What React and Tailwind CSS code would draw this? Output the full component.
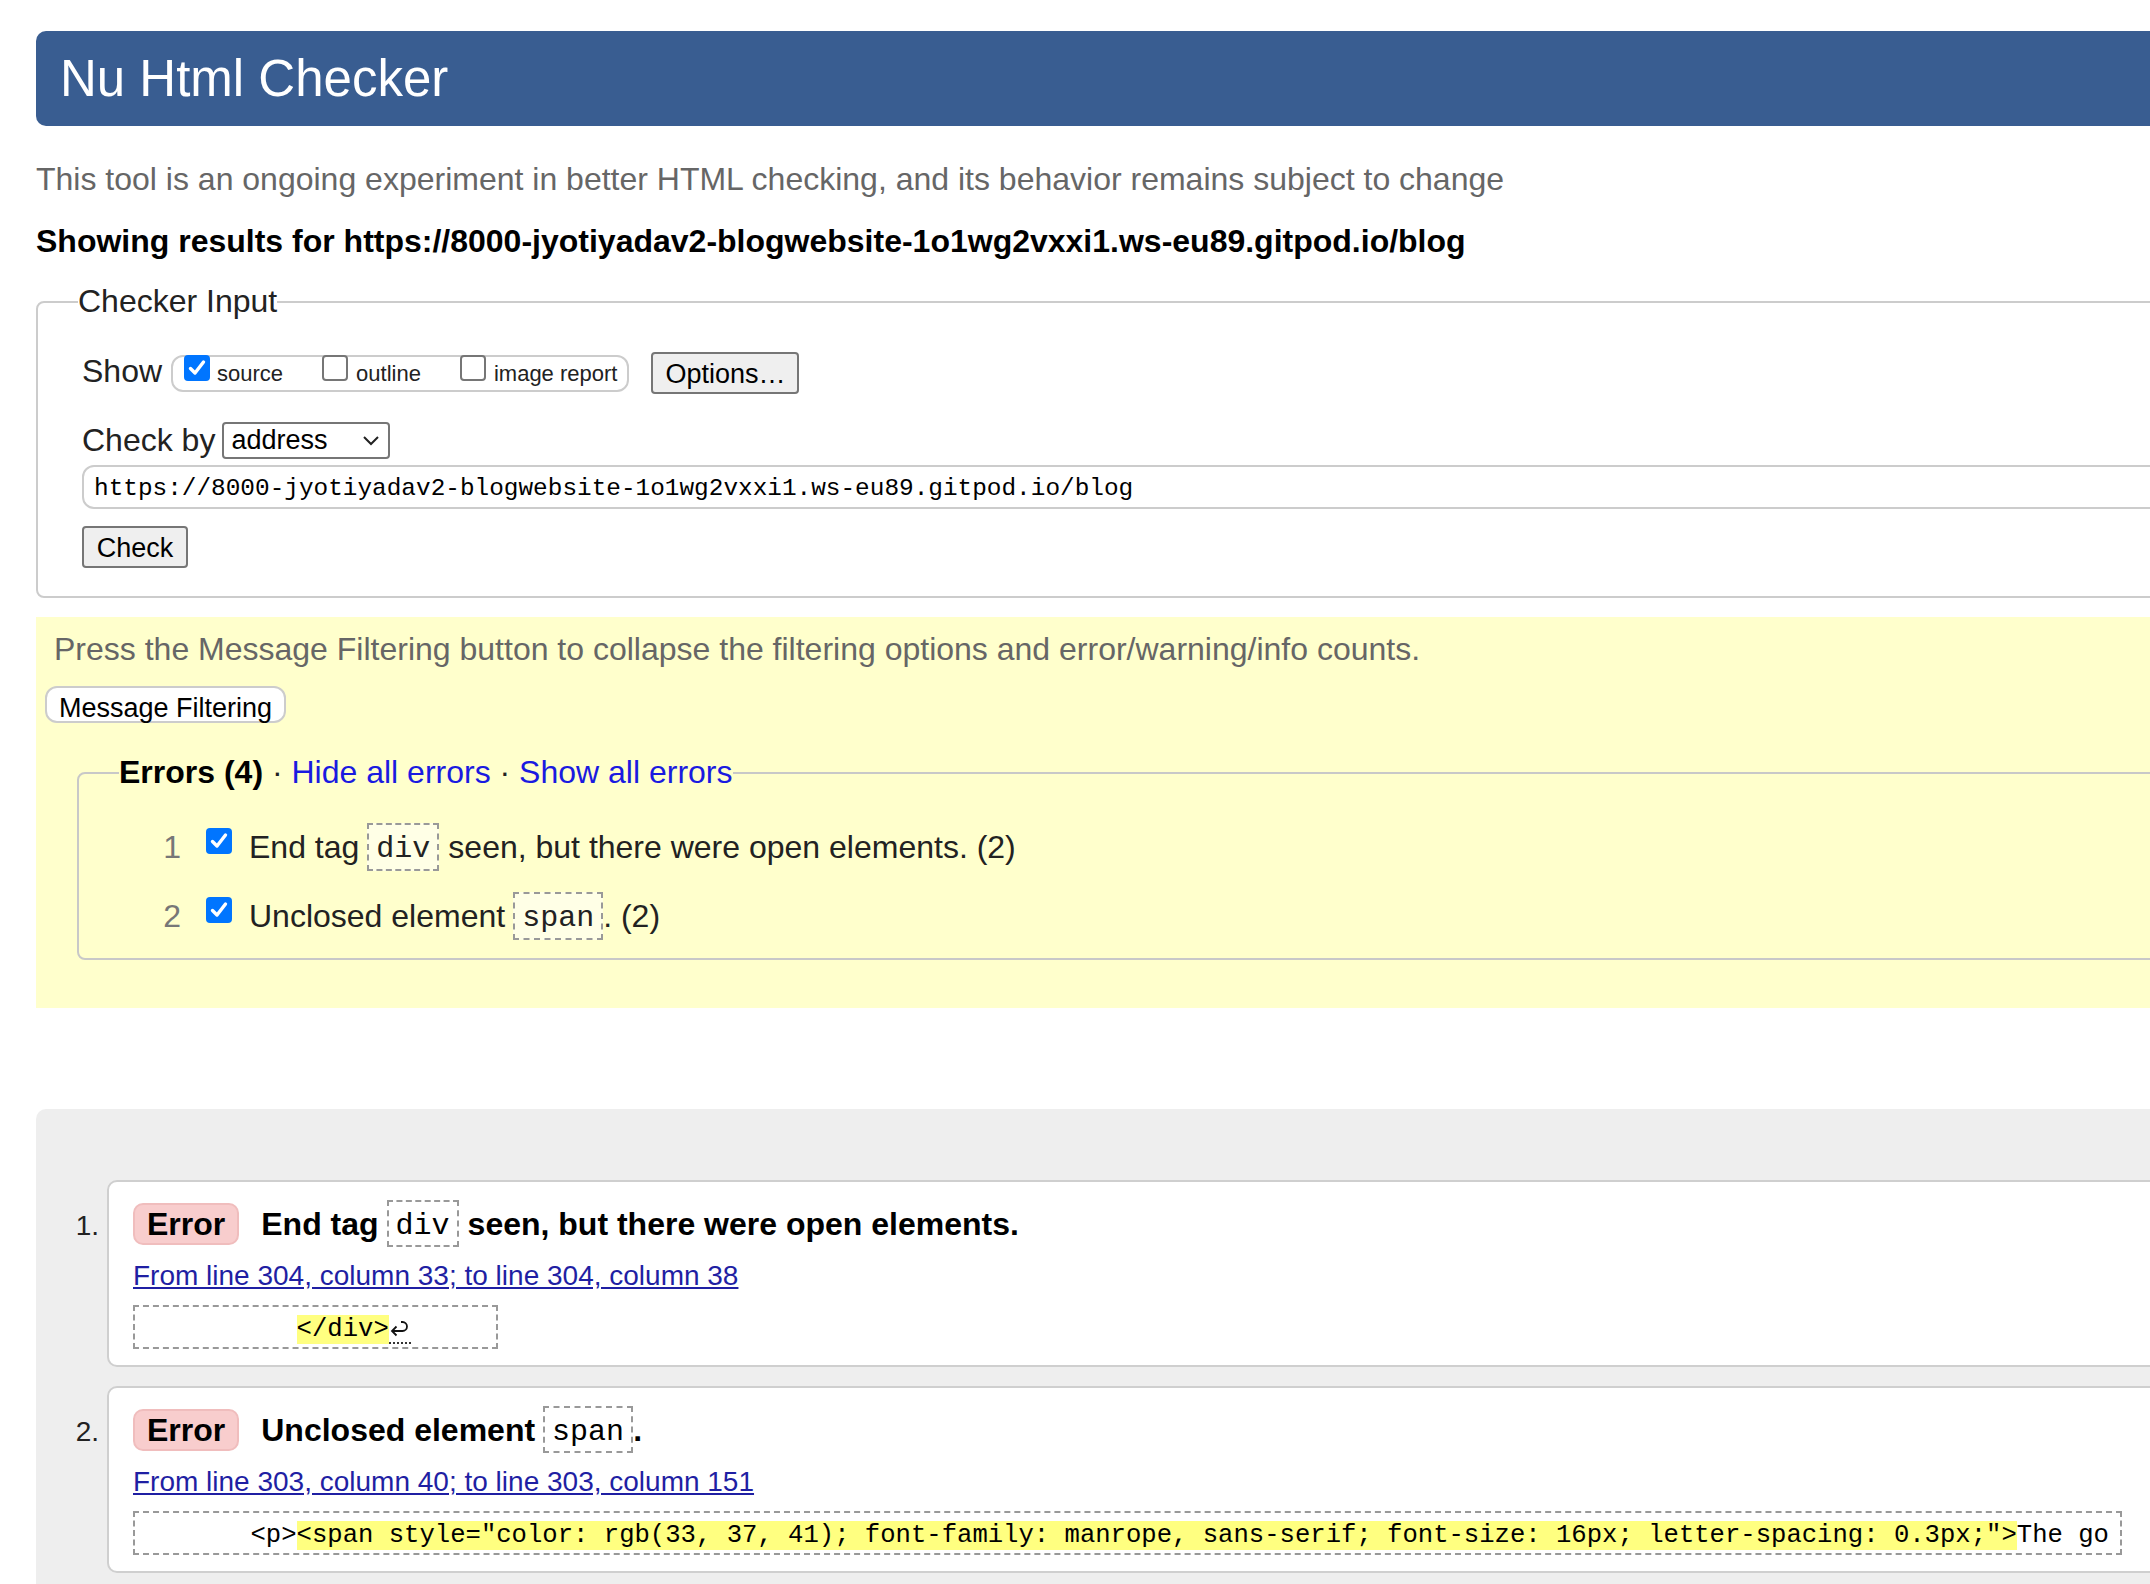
import React from 'react';

const mono = "font-['Liberation_Mono','DejaVu_Sans_Mono',monospace]";

// native-looking checkbox, checked = chrome blue
function CheckBox({ checked, className = '' }) {
    if (checked) {
        return (
            <span className={`inline-flex h-[26px] w-[26px] shrink-0 items-center justify-center rounded-[4px] bg-[#0075ff] ${className}`}>
                <svg viewBox="0 0 26 26" className="h-[26px] w-[26px]">
                    <path d="M6.5 13.5l4.5 4.5L19.5 7" fill="none" stroke="#fff" strokeWidth="3.4" strokeLinecap="round" strokeLinejoin="round" />
                </svg>
            </span>
        );
    }
    return <span className={`inline-block h-[26px] w-[26px] shrink-0 rounded-[4px] border-2 border-[#767676] bg-white ${className}`} />;
}

const Code = ({ children, tall, className = '' }) => (
    <span
        className={`inline-flex items-center border-2 border-dashed border-[#999] px-[7px] font-normal text-[30px] ${mono} ${tall ? 'h-[48px] pt-[4px]' : 'h-[47px] pt-[5px]'} ${className}`}
    >
        {children}
    </span>
);

// the "↩" line-end marker, dotted underline like the checker draws it
const LineEnd = () => (
    <span className="inline-block w-[22px] border-b-2 border-dotted border-[#333] align-[-8px]">
        <svg className="block" width="20" height="24" viewBox="0 0 20 24">
            <path d="M3 13H13.5a4.5 4.5 0 0 0 0-9H12" fill="none" stroke="#111" strokeWidth="1.8" />
            <path d="M7.5 8.5L3 13l4.5 4.5" fill="none" stroke="#111" strokeWidth="1.8" />
        </svg>
    </span>
);

const SummaryRow = ({ n, children, className = '' }) => (
    <div className={`flex h-[48px] items-center text-[32px] ${className}`}>
        <span className="w-[62px] text-right text-[#777]">{n}</span>
        <CheckBox checked className="mb-[12px] ml-[25px]" />
        <div className="ml-[17px] flex items-center">{children}</div>
    </div>
);

const Message = ({ n, children, location, extract, extractWidth, first }) => (
    <li className={`flex ${first ? '' : 'mt-[19px]'}`}>
        <div className="mt-[20px] flex h-[47px] w-[71px] shrink-0 items-center justify-end pr-[8px] pt-[4px] text-[28px]">{n}.</div>
        <div className="flex-1 rounded-[10px] border-2 border-[#cfcfcf] bg-white pb-[16px] pl-[24px] pt-[18px]">
            <div className="flex h-[47px] items-center text-[32px] font-bold text-black">
                <span className="flex h-[42px] items-center rounded-[10px] border-2 border-[#f0bdbd] bg-[#f8cdcd] px-[12px]">Error</span>
                <div className="ml-[22px] flex items-center">{children}</div>
            </div>
            <p className="mt-[13px] text-[28px] leading-[32px]">
                <a href="#" className="text-[#1f1fa3] underline">{location}</a>
            </p>
            <div className={`mt-[13px] flex h-[44px] items-center border-2 border-dashed border-[#999] px-[8px] pt-[7px] text-[25.6px] text-black ${mono} ${extractWidth}`}>
                <span className="whitespace-pre">{extract}</span>
            </div>
        </div>
    </li>
);

export default function App() {
    return (
        <div className="h-[1584px] w-[2150px] overflow-hidden bg-white font-['Liberation_Sans',Arial,sans-serif] text-[#222]">
            <div className="w-[2400px] pl-[36px] pt-[31px]">
                <h1 className="h-[95px] rounded-[10px] bg-[#395d91] pl-[24px] pt-[19px] text-[51px] font-normal leading-[58px] text-white">
                    Nu Html Checker
                </h1>
                <p className="mt-[35px] text-[32px] leading-[37px] text-[#666]">
                    This tool is an ongoing experiment in better HTML checking, and its behavior remains subject to change
                </p>
                <p className="mt-[25px] text-[32px] font-bold leading-[37px] text-black">
                    Showing results for https://8000-jyotiyadav2-blogwebsite-1o1wg2vxxi1.ws-eu89.gitpod.io/blog
                </p>

                {/* Checker input */}
                <fieldset className="mt-[23px] rounded-[8px] border-2 border-[#ccc] pb-[28px] pl-[40px] pt-[32px]">
                    <legend className="text-[32px] leading-[37px]">Checker Input</legend>
                    <div className="pl-[4px]">
                        <div className="flex h-[42px] items-center">
                            <span className="mb-[4px] text-[32px] leading-[37px]">Show</span>
                            <div className="ml-[9px] flex h-[37px] items-center rounded-[12px] border-2 border-[#ccc] pl-[11px] pr-[10px] text-[22px]">
                                <CheckBox checked className="mb-[10px]" />
                                <span className="ml-[7px]">source</span>
                                <CheckBox className="mb-[10px] ml-[39px]" />
                                <span className="ml-[8px]">outline</span>
                                <CheckBox className="mb-[10px] ml-[39px]" />
                                <span className="ml-[8px]">image report</span>
                            </div>
                            <button className="ml-[22px] h-[42px] w-[148px] rounded-[4px] border-2 border-[#767676] bg-[#efefef] text-[27px] text-black">
                                Options…
                            </button>
                        </div>

                        <div className="mt-[28px] flex h-[37px] items-center">
                            <span className="text-[32px] leading-[37px]">Check by</span>
                            <div className="ml-[7px] flex h-[37px] w-[168px] items-center justify-between rounded-[4px] border-2 border-[#767676] bg-white pl-[7px] pr-[8px] text-[27px] text-black">
                                <span>address</span>
                                <svg width="18" height="11" viewBox="0 0 18 11">
                                    <path d="M2 2l7 7 7-7" fill="none" stroke="#222" strokeWidth="2" />
                                </svg>
                            </div>
                        </div>

                        <div className={`mt-[6px] flex h-[44px] items-center rounded-[12px] border-2 border-[#ccc] pl-[10px] pt-[4px] text-[24.4px] text-black ${mono}`}>
                            https://8000-jyotiyadav2-blogwebsite-1o1wg2vxxi1.ws-eu89.gitpod.io/blog
                        </div>

                        <button className="mt-[17px] block h-[42px] w-[106px] rounded-[4px] border-2 border-[#767676] bg-[#efefef] text-[27px] text-black">
                            Check
                        </button>
                    </div>
                </fieldset>

                {/* Message filtering */}
                <div className="mt-[19px] bg-[#ffffcc] pb-[48px] pt-[14px]">
                    <p className="pl-[18px] text-[32px] leading-[37px] text-[#666]">
                        Press the Message Filtering button to collapse the filtering options and error/warning/info counts.
                    </p>
                    <button className="ml-[9px] mt-[18px] block h-[37px] rounded-[12px] border-2 border-[#ccc] bg-white px-[12px] text-[27px] text-black">
                        Message Filtering
                    </button>
                    <fieldset className="ml-[41px] mt-[31px] rounded-[8px] border-2 border-[#c8c8c8] pb-[18px] pl-[40px] pt-[32px]">
                        <legend className="text-[32px] leading-[37px]">
                            <b className="text-black">Errors (4)</b> ·{' '}
                            <a href="#" className="text-[#1a1ae0]">Hide all errors</a> ·{' '}
                            <a href="#" className="text-[#1a1ae0]">Show all errors</a>
                        </legend>
                        <SummaryRow n="1">
                            <span>End tag</span>
                            <Code tall className="ml-[8px] bg-white/50">div</Code>
                            <span className="ml-[9px]">seen, but there were open elements. (2)</span>
                        </SummaryRow>
                        <SummaryRow n="2" className="mt-[21px]">
                            <span>Unclosed element</span>
                            <Code tall className="ml-[8px] bg-white/50">span</Code>
                            <span>. (2)</span>
                        </SummaryRow>
                    </fieldset>
                </div>

                {/* Results */}
                <div className="mt-[101px] rounded-[10px] bg-[#eeeeee] pb-[60px] pt-[71px]">
                    <ol>
                        <Message
                            first
                            n="1"
                            location="From line 304, column 33; to line 304, column 38"
                            extractWidth="w-[365px]"
                            extract={
                                <>
                                    {'          '}
                                    <span className="bg-[#ffff80]">{'</div>'}</span>
                                    <LineEnd />
                                </>
                            }
                        >
                            <span>End tag</span>
                            <Code className="ml-[8px]">div</Code>
                            <span className="ml-[9px]">seen, but there were open elements.</span>
                        </Message>
                        <Message
                            n="2"
                            location="From line 303, column 40; to line 303, column 151"
                            extractWidth="w-[1989px]"
                            extract={
                                <>
                                    {'       <p>'}
                                    <span className="bg-[#ffff80]">
                                        {'<span style="color: rgb(33, 37, 41); font-family: manrope, sans-serif; font-size: 16px; letter-spacing: 0.3px;">'}
                                    </span>
                                    The go
                                </>
                            }
                        >
                            <span>Unclosed element</span>
                            <Code className="ml-[8px]">span</Code>
                            <span>.</span>
                        </Message>
                    </ol>
                </div>
            </div>
        </div>
    );
}
